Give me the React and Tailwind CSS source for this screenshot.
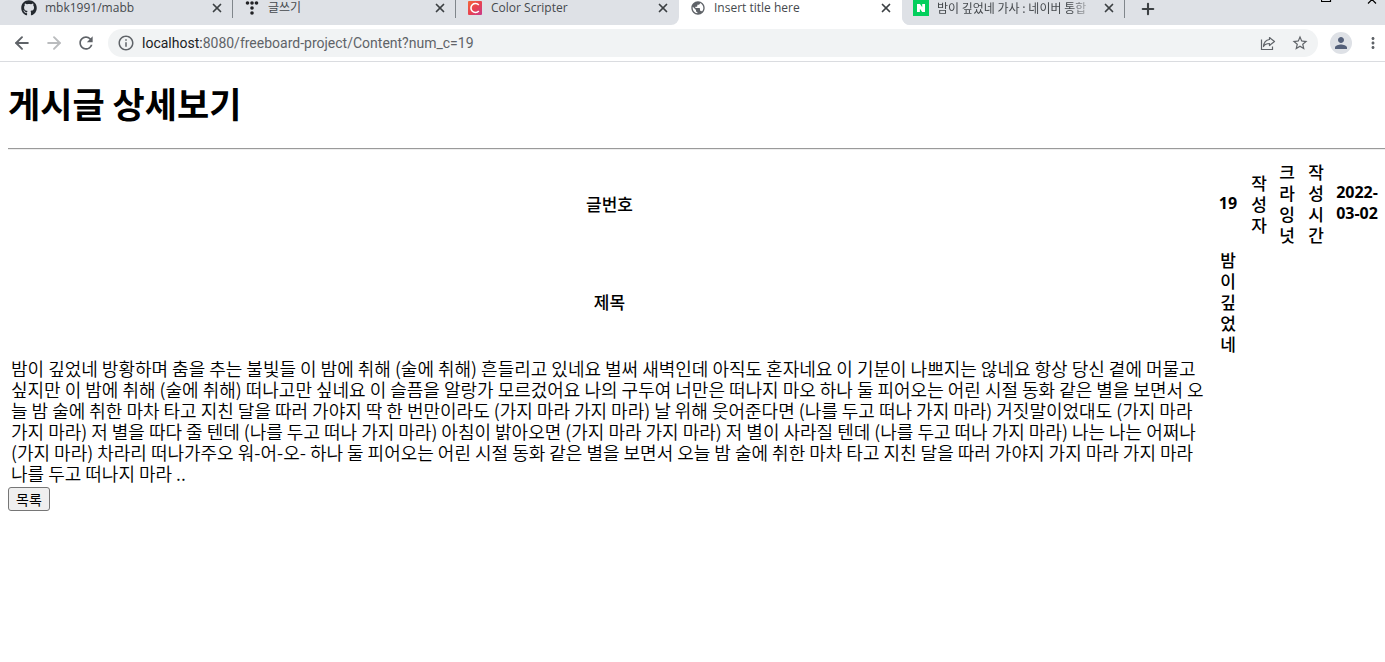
import { ArrowLeft, ArrowRight, X, Plus } from 'lucide-react';
import { MdRefresh, MdInfoOutline, MdStarBorder, MdMoreVert, MdPerson, MdPublic } from 'react-icons/md';
import { FaGithub } from 'react-icons/fa';

const LYRICS = `밤이 깊었네 방황하며 춤을 추는 불빛들 이 밤에 취해 (술에 취해) 흔들리고 있네요 벌써 새벽인데 아직도 혼자네요 이 기분이 나쁘지는 않네요 항상 당신 곁에 머물고
싶지만 이 밤에 취해 (술에 취해) 떠나고만 싶네요 이 슬픔을 알랑가 모르겄어요 나의 구두여 너만은 떠나지 마오 하나 둘 피어오는 어린 시절 동화 같은 별을 보면서 오
늘 밤 술에 취한 마차 타고 지친 달을 따러 가야지 딱 한 번만이라도 (가지 마라 가지 마라) 날 위해 웃어준다면 (나를 두고 떠나 가지 마라) 거짓말이었대도 (가지 마라
가지 마라) 저 별을 따다 줄 텐데 (나를 두고 떠나 가지 마라) 아침이 밝아오면 (가지 마라 가지 마라) 저 별이 사라질 텐데 (나를 두고 떠나 가지 마라) 나는 나는 어쩌나
(가지 마라) 차라리 떠나가주오 워-어-오- 하나 둘 피어오는 어린 시절 동화 같은 별을 보면서 오늘 밤 술에 취한 마차 타고 지친 달을 따러 가야지 가지 마라 가지 마라
나를 두고 떠나지 마라 ..`;

function TistoryIcon() {
  return (
    <svg viewBox="0 0 16 16" className="size-4" fill="#202124" aria-hidden="true">
      <circle cx="3.5" cy="3" r="1.8" />
      <circle cx="8" cy="3" r="1.8" />
      <circle cx="12.5" cy="3" r="1.8" />
      <circle cx="8" cy="8" r="1.8" />
      <circle cx="8" cy="13" r="1.8" />
    </svg>
  );
}

function ScripterIcon() {
  return (
    <svg viewBox="0 0 16 16" className="size-4" aria-hidden="true">
      <defs>
        <linearGradient id="scripter" x1="0" y1="0" x2="1" y2="1">
          <stop offset="0" stopColor="#f4683a" />
          <stop offset="0.5" stopColor="#e8434f" />
          <stop offset="1" stopColor="#c93a8c" />
        </linearGradient>
      </defs>
      <rect x="1" y="1" width="14" height="14" rx="1" fill="url(#scripter)" />
      <path d="M11.8 5A4.5 4.5 0 1 0 11.8 11" fill="none" stroke="#fff" strokeWidth="1.6" />
    </svg>
  );
}

function NaverIcon() {
  return (
    <svg viewBox="0 0 16 16" className="size-4" aria-hidden="true">
      <rect width="16" height="16" fill="#03cf5d" />
      <path d="M4 4h3l2.2 3.3V4H12v8H9.2L6.9 8.7V12H4z" fill="#fff" />
    </svg>
  );
}

const TABS = [
  { title: 'mbk1991/mabb', icon: <FaGithub className="size-4 text-[#24292f]" />, divider: true },
  { title: '글쓰기', icon: <TistoryIcon />, divider: true },
  { title: 'Color Scripter', icon: <ScripterIcon /> },
  { title: 'Insert title here', icon: <MdPublic className="size-4 text-[#5f6368]" />, active: true },
  { title: '밤이 깊었네 가사 : 네이버 통합', icon: <NaverIcon />, divider: true, fade: true },
];

function Tab({ title, icon, active, divider, fade }) {
  return (
    <div className={active ? 'flex w-[223px] shrink-0 bg-white' : 'flex w-[223px] shrink-0 bg-[#dee1e6]'}>
      <div className="flex h-4 min-w-0 flex-1 items-center pl-[11px] pr-2">
        <span className="shrink-0">{icon}</span>
        <span
          className={
            fade
              ? "ml-2 min-w-0 flex-1 whitespace-nowrap font-['Noto_Sans_CJK_KR',sans-serif] mask-r-from-85%"
              : 'ml-2 min-w-0 flex-1 whitespace-nowrap'
          }
        >
          {title}
        </span>
        <button type="button" aria-label={`${title} 닫기`} className="ml-2 shrink-0">
          <X className="size-3.5 text-[#3c4043]" strokeWidth={3} />
        </button>
      </div>
      <div className={divider ? 'h-[18px] w-px bg-[#80868b]' : 'h-[18px] w-px'} />
    </div>
  );
}

function Browser() {
  return (
    <header className="font-['Open_Sans','Noto_Sans_CJK_KR',sans-serif]">
      <div className="flex h-[25px] overflow-hidden bg-white text-[12px] leading-4 text-[#45494d]">
        <div className="w-2.5 shrink-0 bg-[#dee1e6]" />
        <div className="flex shrink-0 overflow-hidden rounded-br-lg">
          {TABS.slice(0, 3).map((t) => <Tab key={t.title} {...t} />)}
        </div>
        <Tab {...TABS[3]} />
        <div className="flex min-w-0 flex-1 overflow-hidden rounded-bl-lg bg-[#dee1e6]">
          <Tab {...TABS[4]} />
          <button type="button" aria-label="새 탭" className="ml-3.5 h-4 shrink-0">
            <Plus className="size-[18px] text-[#3c4043]" strokeWidth={2.8} />
          </button>
          <svg viewBox="0 0 60 4" className="ml-auto mr-1 h-1 w-[60px] shrink-0" fill="none" stroke="#000" aria-hidden="true">
            <path d="M.5 0V1.5H9.5V0M47 3.5L51 -.5L55 3.5" strokeWidth="1.2" />
          </svg>
        </div>
      </div>
      <div className="flex h-[37px] items-center border-b border-[#dadce0] bg-white pl-3 pr-[3px] text-[#5f6368]">
        <button type="button" aria-label="뒤로"><ArrowLeft className="size-5" strokeWidth={2.3} /></button>
        <button type="button" aria-label="앞으로" className="ml-3 text-[#babcbe]"><ArrowRight className="size-5" strokeWidth={2.3} /></button>
        <button type="button" aria-label="새로고침" className="ml-3"><MdRefresh className="size-5" /></button>
        <div className="ml-3 flex h-7 flex-1 items-center rounded-full bg-[#f1f3f4] px-[9px]">
          <MdInfoOutline className="size-[18px]" />
          <div className="ml-[7px] flex-1 font-['Roboto',sans-serif] text-[14px]">
            <a href="#address"><span className="text-[#202124]">localhost:</span>8080/freeboard-project/Content?num_c=19</a>
          </div>
          <button type="button" aria-label="공유">
            <svg viewBox="0 0 18 18" className="size-[18px]" fill="none" stroke="currentColor" strokeWidth="1.2" aria-hidden="true">
              <path d="M2.5 5.5V15.5H13.5V12.5" />
              <path d="M10.5 3.5L15.5 7.5L10.5 11.5V9.5C7.5 9.5 5.7 10.5 4.5 12.5C4.8 8.5 7 6 10.5 5.5Z" strokeLinejoin="round" />
            </svg>
          </button>
          <button type="button" aria-label="북마크" className="ml-3.5"><MdStarBorder className="size-[18px]" /></button>
        </div>
        <button type="button" aria-label="프로필" className="ml-3 flex size-[22px] items-center justify-center rounded-full bg-[#dee1e6]">
          <MdPerson className="size-[18px] text-[#54607a]" />
        </button>
        <button type="button" aria-label="메뉴" className="ml-3"><MdMoreVert className="size-[18px]" /></button>
      </div>
    </header>
  );
}

export default function App() {
  return (
    <div className="min-h-screen overflow-x-hidden bg-white text-black">
      <Browser />
      <main className="pl-2 font-['Noto_Sans_CJK_KR',sans-serif]">
        <h1 className="pt-[18px] text-[35px] font-bold leading-[46px]">게시글 상세보기</h1>
        <hr className="mb-2 mt-[22px] border-t border-[#9a9a9a] border-b border-b-[#eeeeee]" />
        <table className="w-full table-fixed border-separate border-spacing-0.5 text-[17px] leading-[21px]">
          <colgroup>
            <col />
            <col className="w-[34px]" />
            <col className="w-[24px]" />
            <col className="w-[28px]" />
            <col className="w-[26px]" />
            <col className="w-[52px]" />
          </colgroup>
          <tbody className="break-all">
            <tr>
              <th className="p-px font-medium">글번호</th>
              <th className="whitespace-nowrap p-px font-['Open_Sans',sans-serif] text-[16px]">19</th>
              <th className="p-px font-medium">작성자</th>
              <th className="p-px font-medium">크라잉넛</th>
              <th className="p-px font-medium">작성시간</th>
              <th className="whitespace-nowrap p-px font-['Open_Sans',sans-serif] text-[16px]">2022-<br />03-02</th>
            </tr>
            <tr>
              <th className="p-px font-medium">제목</th>
              <th className="px-[7px] py-px font-medium">밤이깊었네</th>
            </tr>
            <tr>
              <td className="whitespace-pre-line break-keep p-px text-[18px] font-[350]">{LYRICS}</td>
            </tr>
          </tbody>
        </table>
        <button type="button" className="block h-6 rounded-[3px] border border-[#767676] bg-[#efefef] px-[7px] text-[14px] leading-5">목록</button>
      </main>
    </div>
  );
}
